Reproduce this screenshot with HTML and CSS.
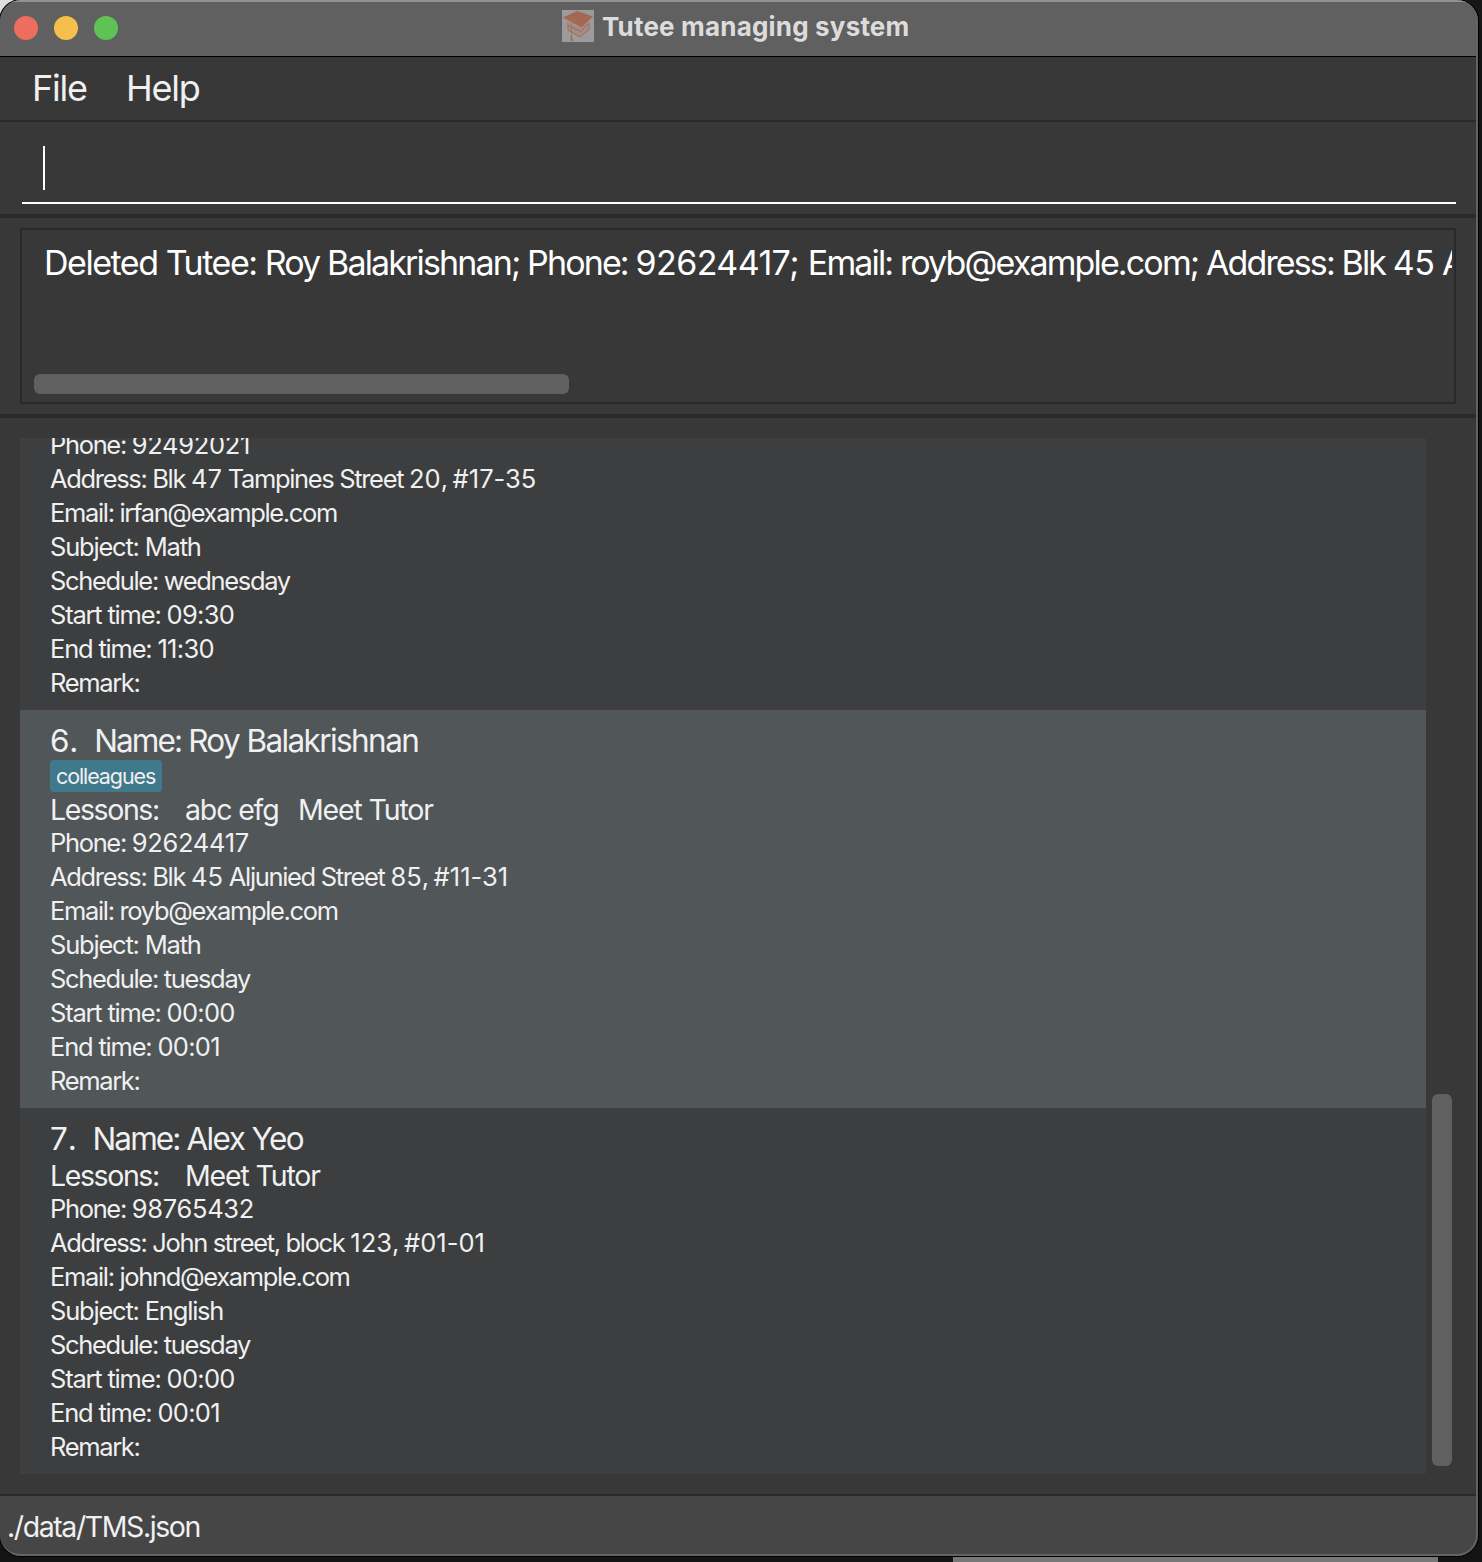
FILE: index.html
```html
<!DOCTYPE html>
<html lang="en">
<head>
<meta charset="utf-8">
<title>Tutee managing system</title>
<link rel="stylesheet" href="styles.css">
</head>
<body>
<div class="window">
  <header class="titlebar">
    <div class="lights"><i class="light close"></i><i class="light minimise"></i><i class="light expand"></i></div>
    <svg class="app-icon" viewBox="0 0 32 32">
      <rect width="32" height="32" fill="#9b9b9b"/>
      <path d="M7 13v8l11 6.500 9-7.500v-9l-8 7z" fill="#a38d85"/>
      <path d="M1 7.500 15 1l16 5.500L19.500 17.500z" fill="#a66752"/>
      <path d="M6 12.500v7.500l12 7 9-7.500V13M6 15.500l12.500 6L26 14" fill="none" stroke="#a46a56" stroke-width="1"/>
      <path d="M16 8.500 9.500 11.500v13" fill="none" stroke="#a0796b" stroke-width="1"/>
      <path d="M9 25h1l.8 6H8.500z" fill="#a46a56"/>
    </svg>
    <h1 class="title">Tutee managing system</h1>
  </header>
  <nav class="menubar"><span>File</span><span>Help</span></nav>
  <section class="command"><div class="command-field"><i class="caret"></i></div></section>
  <section class="result">
    <div class="result-box">
      <p class="result-text"><span class="intro">Deleted Tutee: </span>Roy Balakrishnan; Phone: <span class="num">92624417; </span>Email: royb@example.com; Address: Blk <span class="num">45</span> A</p>
      <div class="h-thumb"></div>
    </div>
  </section>
  <main class="content">
    <div class="list">
      <article class="card">
        <p>Phone: <span class="phone">92492021</span></p>
        <p>Address: Blk <span class="num">47</span> Tampines Street <span class="num">20</span>, <span class="num">#17-35</span></p>
        <p>Email: irfan@example.com</p>
        <p class="loose">Subject: Math</p>
        <p>Schedule: wednesday</p>
        <p class="loose">Start time: <span class="time">09:30</span></p>
        <p class="loose">End time: <span class="time">11:30</span></p>
        <p>Remark:</p>
      </article>
      <article class="card selected">
        <h2><span class="index">6.</span><span><span class="name-label">Name: </span>Roy Balakrishnan</span></h2>
        <div class="tags"><span class="tag">colleagues</span></div>
        <div class="lessons"><span class="lesson-label">Lessons:</span><span class="lesson">abc efg</span><span class="lesson">Meet Tutor</span></div>
        <p>Phone: <span class="phone">92624417</span></p>
        <p>Address: Blk <span class="num">45</span> Aljunied Street <span class="num">85</span>, <span class="num">#11-31</span></p>
        <p>Email: royb@example.com</p>
        <p class="loose">Subject: Math</p>
        <p>Schedule: tuesday</p>
        <p class="loose">Start time: <span class="time">00:00</span></p>
        <p class="loose">End time: <span class="time">00:01</span></p>
        <p>Remark:</p>
      </article>
      <article class="card">
        <h2><span class="index">7.</span><span><span class="name-label">Name: </span>Alex Yeo</span></h2>
        <div class="lessons"><span class="lesson-label">Lessons:</span><span class="lesson">Meet Tutor</span></div>
        <p>Phone: <span class="phone">98765432</span></p>
        <p>Address: John street, block <span class="num">123</span>, <span class="num">#01-01</span></p>
        <p>Email: johnd@example.com</p>
        <p class="loose">Subject: English</p>
        <p>Schedule: tuesday</p>
        <p class="loose">Start time: <span class="time">00:00</span></p>
        <p class="loose">End time: <span class="time">00:01</span></p>
        <p>Remark:</p>
      </article>
    </div>
    <div class="v-track"><div class="v-thumb"></div></div>
  </main>
  <footer class="status">./data/TMS.json</footer>
</div>
<div class="desk"></div>
</body>
</html>
```
FILE: styles.css
```css
* { box-sizing: border-box; }
body { margin: 0; width: 1482px; height: 1562px; overflow: hidden; background: linear-gradient(90deg, #dedede 0 30px, #171717 30px) 0 0 / 100% 28px no-repeat, #141414; color: #f0f0f0; font-family: Inter, "Liberation Sans", sans-serif; }
h1, h2, p { margin: 0; font-weight: 400; white-space: pre; }
.window { position: relative; display: flex; flex-direction: column; width: 1478px; height: 1556px; overflow: hidden; border-radius: 21px; background: #383838; box-shadow: 0 0 0 1px #000; }
.window::after { content: ""; position: absolute; inset: 0; border: solid #636363; border-width: 0 2px 2px 0; border-radius: 21px; }
.titlebar { display: flex; align-items: flex-start; height: 57px; flex: none; background: #606060; border-top: 2px solid #929292; border-bottom: 1px solid #000; }
.lights { display: flex; gap: 16px; width: 562px; padding: 14px 0 0 14px; }
.light { width: 24px; height: 24px; border-radius: 50%; }
.close { background: #ef6d5e; }
.minimise { background: #f6be4a; }
.expand { background: #5ec353; }
.app-icon { width: 32px; height: 32px; margin-top: 8px; }
.title { margin: 9px 0 0 8px; font-size: 26px; line-height: 32px; font-weight: 700; letter-spacing: .18px; color: #dcdcdc; }
.menubar { display: flex; gap: 39px; height: 65px; flex: none; padding-left: 32px; border-bottom: 2px solid #292929; font-size: 36px; line-height: 62px; letter-spacing: -1.2px; }
.command { height: 96px; flex: none; padding: 14px 22px 0; border-bottom: 4px solid #292929; }
.command-field { height: 68px; border-bottom: 2px solid #fff; padding: 10px 0 0 21px; }
.caret { display: block; width: 2px; height: 44px; background: #fff; }
.result { height: 200px; flex: none; padding: 10px 22px 0 20px; border-bottom: 4px solid #292929; }
.result-box { display: flex; flex-direction: column; justify-content: space-between; height: 176px; border: 2px solid #292929; padding: 12px 2px 8px 12px; }
.result-text { padding-left: 10px; font-size: 34px; line-height: 42px; letter-spacing: -1.86px; color: #fff; overflow: hidden; }
.result-text .intro { letter-spacing: -1.47px; }
.result-text .num { letter-spacing: -.58px; }
.h-thumb { width: 535px; height: 20px; border-radius: 6px; background: #606060; }
.content { display: flex; height: 1076px; flex: none; padding: 20px 26px 20px 20px; }
.list { display: flex; flex-direction: column; justify-content: flex-end; width: 1406px; height: 1036px; overflow: hidden; }
.card { flex: none; padding: 0 30px 10px; background: #3c3e3f; font-size: 25.5px; line-height: 34px; letter-spacing: -1.34px; }
.card.selected { background: #515658; }
.card .loose { letter-spacing: -1.2px; }
.card .num { letter-spacing: .03px; }
.card .phone { letter-spacing: -.3px; }
.card .time { letter-spacing: -.7px; }
.card h2 { display: flex; gap: 16px; height: 50px; padding-top: 10px; font-size: 31.5px; line-height: 42px; letter-spacing: -1.6px; }
.name-label { letter-spacing: -1.9px; }
.index { letter-spacing: -.2px; font-kerning: none; }
.tags { display: flex; height: 32px; }
.tag { width: 112px; padding: 0 6px; border-radius: 4px; background: #40788c; font-size: 21.5px; line-height: 32px; letter-spacing: -1.1px; }
.lessons { display: flex; height: 34px; font-size: 28.5px; line-height: 36px; }
.lesson-label { width: 135px; letter-spacing: -1.4px; }
.lesson { margin-right: 19.5px; letter-spacing: -1.15px; }
.v-track { width: 26px; padding: 656px 0 0 6px; }
.v-thumb { width: 20px; height: 372px; border-radius: 6px; background: #606060; }
.status { flex: 1; border-top: 2px solid #292929; background: #464646; padding-left: 7px; font-size: 28.5px; line-height: 62px; letter-spacing: -1.42px; }
.desk { width: 485px; height: 5px; margin: 1px 0 0 953px; background: #777; }
```
